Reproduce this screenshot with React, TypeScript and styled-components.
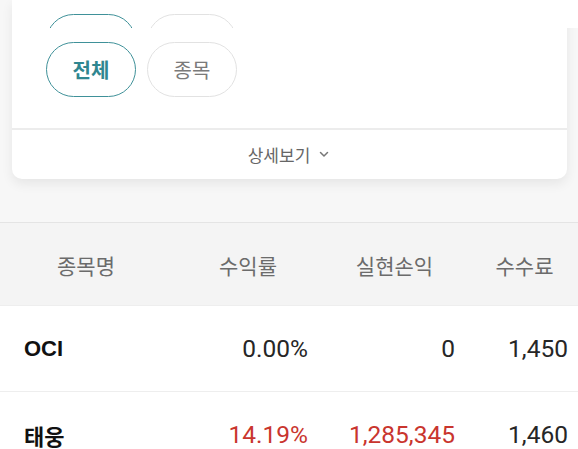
import React from "react";
import styled, { createGlobalStyle } from "styled-components";

const Global = createGlobalStyle`
  html, body { margin: 0; padding: 0; background: #f7f7f7; }
  body { font-family: Roboto, "Noto Sans CJK KR", "Noto Sans", sans-serif; -webkit-font-smoothing: antialiased; }
  * { box-sizing: border-box; }
`;

const Page = styled.div`
  position: relative;
  width: 578px;
  height: 449px;
  overflow: hidden;
  background: #f7f7f7;
`;

const StickyBar = styled.div`
  position: absolute;
  top: 0;
  left: 12px;
  right: 0;
  height: 28px;
  overflow: hidden;
  background: #ffffff;
  z-index: 2;
`;

const Card = styled.section`
  margin: 0 11px 0 12px;
  padding-top: 42px;
  background: #ffffff;
  border-radius: 0 0 10px 10px;
  box-shadow: 0 5px 12px rgba(0, 0, 0, 0.07);
`;

const PillRow = styled.div<{ $top?: number }>`
  display: flex;
  gap: 11px;
  padding-left: 34px;
  padding-top: ${(p) => p.$top ?? 0}px;
`;

const Pill = styled.button<{ $active?: boolean }>`
  width: 90px;
  height: 55px;
  flex: none;
  border-radius: 28px;
  background: #ffffff;
  border: 1.5px solid ${(p) => (p.$active ? "#3f9199" : "#e2e2e2")};
  color: ${(p) => (p.$active ? "#2f8690" : "#7a7a7a")};
  font-family: "Noto Sans CJK KR", sans-serif;
  font-size: 20px;
  font-weight: ${(p) => (p.$active ? 700 : 400)};
  display: flex;
  align-items: center;
  justify-content: center;
  padding: 0;
`;

const Divider = styled.div`
  margin-top: 31px;
  height: 2px;
  background: #ececec;
`;

const MoreButton = styled.div`
  height: 49px;
  display: flex;
  align-items: center;
  justify-content: center;
  gap: 9px;
  color: #666666;
  font-family: "Noto Sans CJK KR", sans-serif;
  font-size: 17px;
  padding-right: 2px;
`;

const Table = styled.div`
  margin-top: 43px;
  border-top: 1.5px solid #e4e4e4;
`;

const Row = styled.div<{ $head?: boolean }>`
  display: grid;
  grid-template-columns: 172px 152px 141px 1fr;
  align-items: center;
  height: ${(p) => (p.$head ? 82 : 86)}px;
  background: ${(p) => (p.$head ? "#f4f4f4" : "#ffffff")};
  & + & {
    border-top: ${(p) => (p.$head ? "none" : "1.5px solid #eeeeee")};
  }
`;

const HeadCell = styled.div<{ $shift?: number }>`
  text-align: center;
  color: #6b6b6b;
  font-family: "Noto Sans CJK KR", sans-serif;
  font-size: 21px;
  padding-top: 2px;
  padding-left: ${(p) => p.$shift ?? 0}px;
`;

const NameCell = styled.div`
  padding-left: 24px;
  font-family: "Liberation Sans", "Noto Sans CJK KR", sans-serif;
  font-weight: 700;
  font-size: 22px;
  color: #111111;
`;

const NumCell = styled.div<{ $pr: number; $red?: boolean }>`
  text-align: right;
  padding-right: ${(p) => p.$pr}px;
  font-size: 24.5px;
  color: ${(p) => (p.$red ? "#c9352e" : "#262626")};
`;

const Chevron = () => (
  <svg width="10" height="7" viewBox="0 0 10 7" fill="none">
    <polyline points="1.5,1.5 5,5 8.5,1.5" stroke="#777" strokeWidth="1.5" strokeLinecap="round" strokeLinejoin="round" />
  </svg>
);

const rows = [
  { name: "OCI", rate: "0.00%", pnl: "0", fee: "1,450", red: false },
  { name: "태웅", rate: "14.19%", pnl: "1,285,345", fee: "1,460", red: true },
];

export default function App() {
  return (
    <Page>
      <Global />
      <StickyBar>
        <PillRow $top={14}>
          <Pill $active />
          <Pill />
        </PillRow>
      </StickyBar>
      <Card>
        <PillRow>
          <Pill $active>전체</Pill>
          <Pill>종목</Pill>
        </PillRow>
        <Divider />
        <MoreButton>
          상세보기 <Chevron />
        </MoreButton>
      </Card>
      <Table>
        <Row $head>
          <HeadCell>종목명</HeadCell>
          <HeadCell>수익률</HeadCell>
          <HeadCell>실현손익</HeadCell>
          <HeadCell $shift={6}>수수료</HeadCell>
        </Row>
        {rows.map((r) => (
          <Row key={r.name}>
            <NameCell>{r.name}</NameCell>
            <NumCell $pr={16} $red={r.red}>{r.rate}</NumCell>
            <NumCell $pr={10} $red={r.red}>{r.pnl}</NumCell>
            <NumCell $pr={10}>{r.fee}</NumCell>
          </Row>
        ))}
      </Table>
    </Page>
  );
}
